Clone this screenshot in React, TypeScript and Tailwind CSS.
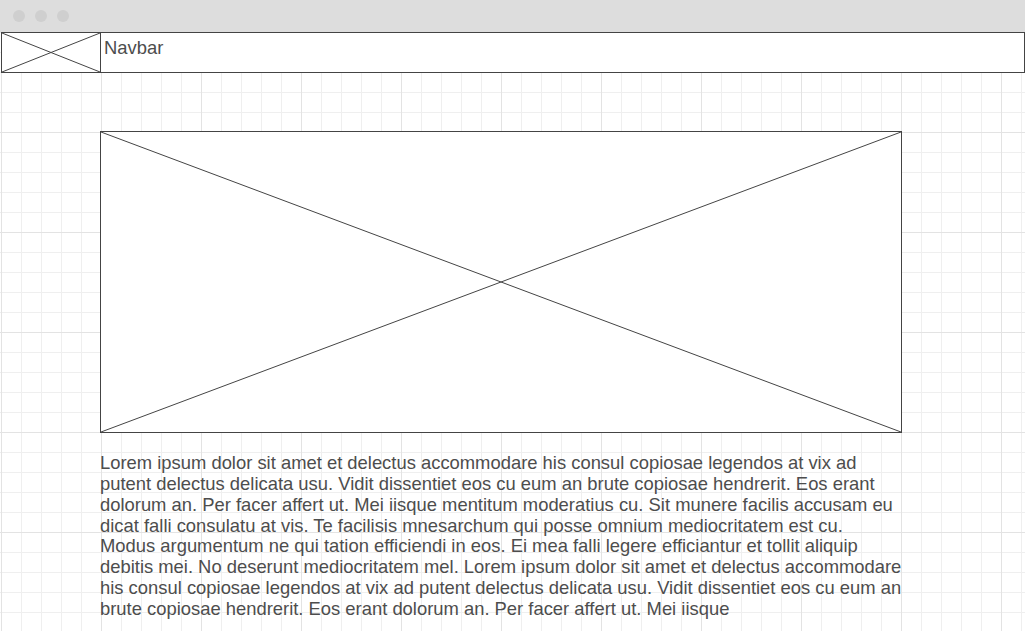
import React from "react";

const LOREM =
  "Lorem ipsum dolor sit amet et delectus accommodare his consul copiosae legendos at vix ad putent delectus delicata usu. Vidit dissentiet eos cu eum an brute copiosae hendrerit. Eos erant dolorum an. Per facer affert ut. Mei iisque mentitum moderatius cu. Sit munere facilis accusam eu dicat falli consulatu at vis. Te facilisis mnesarchum qui posse omnium mediocritatem est cu. Modus argumentum ne qui tation efficiendi in eos. Ei mea falli legere efficiantur et tollit aliquip debitis mei. No deserunt mediocritatem mel. Lorem ipsum dolor sit amet et delectus accommodare his consul copiosae legendos at vix ad putent delectus delicata usu. Vidit dissentiet eos cu eum an brute copiosae hendrerit. Eos erant dolorum an. Per facer affert ut. Mei iisque";

function Cross() {
  return (
    <svg className="absolute inset-0 h-full w-full" preserveAspectRatio="none" viewBox="0 0 100 100">
      <line x1="0" y1="0" x2="100" y2="100" stroke="#444" strokeWidth="1" vectorEffect="non-scaling-stroke" />
      <line x1="100" y1="0" x2="0" y2="100" stroke="#444" strokeWidth="1" vectorEffect="non-scaling-stroke" />
    </svg>
  );
}

export default function App() {
  return (
    <div className="h-[631px] w-[1025px] overflow-hidden bg-white font-['Liberation_Sans',Arial,sans-serif] text-[#4d4d4d]">
      <div className="flex h-8 items-center gap-[10px] bg-[#dddddd] pl-[13px]">
        <span className="h-3 w-3 rounded-full bg-[#cfcfcf]" />
        <span className="h-3 w-3 rounded-full bg-[#cfcfcf]" />
        <span className="h-3 w-3 rounded-full bg-[#cfcfcf]" />
      </div>
      <div className="h-[599px] bg-white bg-[linear-gradient(to_right,#e3e3e3_1px,transparent_1px),linear-gradient(to_bottom,#e3e3e3_1px,transparent_1px),linear-gradient(to_right,#efefef_1px,transparent_1px),linear-gradient(to_bottom,#efefef_1px,transparent_1px)] bg-[size:100px_100px,100px_100px,20px_20px,20px_20px] bg-[position:1px_0px,1px_0px,1px_0px,1px_0px]">
        <div className="ml-px flex h-[41px] w-[1024px] border border-[#444] bg-white">
          <div className="relative h-full w-[99px] border-r border-[#444]">
            <Cross />
          </div>
          <div className="pl-[3px] pt-[5px] text-[18.4px] leading-5">Navbar</div>
        </div>
        <div className="ml-[100px] mt-[58px] w-[802px]">
          <div className="relative h-[302px] w-full border border-[#444] bg-white">
            <Cross />
          </div>
          <p className="mt-5 text-[18.4px] leading-[20.86px]">{LOREM}</p>
        </div>
      </div>
    </div>
  );
}
